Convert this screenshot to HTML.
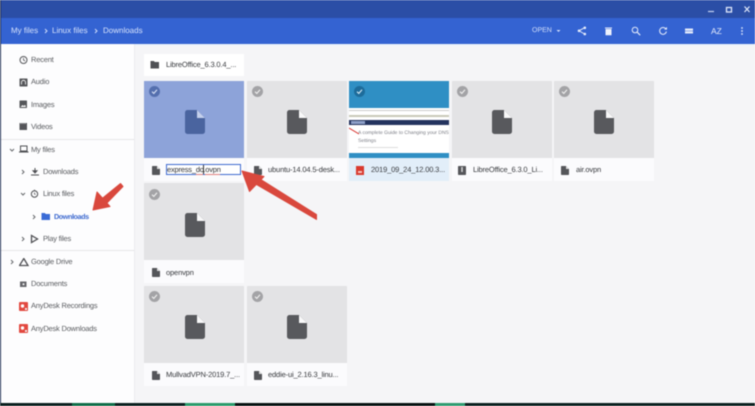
<!DOCTYPE html>
<html><head><meta charset="utf-8">
<style>
html,body{margin:0;padding:0;background:#f5f5f7}
#w{position:relative;width:755px;height:406px;overflow:hidden;background:#f5f5f7;font-family:"Liberation Sans",sans-serif;filter:blur(.45px);text-rendering:geometricPrecision}
#w div,#w svg{position:absolute}
.t{font-size:7.5px;line-height:12px;color:#5a5c60;white-space:nowrap;letter-spacing:-.2px}
.l{font-size:7.5px;line-height:12px;color:#36383c;white-space:nowrap;letter-spacing:-.15px}
.b{font-size:8px;line-height:12px;color:#d6e2fc;white-space:nowrap}
.th{width:100px;height:78px;background:#e3e3e5}
.lb{width:100px;height:23px;background:#fff}
.ck{width:11px;height:11px;border-radius:50%;background:#a3a3a6}
.ck svg{left:0;top:0}
</style></head><body>
<div id="w">
<svg width="0" height="0" style="position:absolute"><defs>
<symbol id="doc" viewBox="0 0 20 24"><path d="M2.500 0H12L20 8V21.500A2.500 2.500 0 0 1 17.500 24H2.500A2.500 2.500 0 0 1 0 21.500V2.500A2.500 2.500 0 0 1 2.500 0Z" fill="currentColor"/><path d="M12 0L20 8H12Z" fill="#f8f8f9"/></symbol>
<symbol id="sd" viewBox="0 0 8 9"><path d="M.7 0H5L8 3V8.300A.7.7 0 0 1 7.300 9H.7A.7.7 0 0 1 0 8.300V.7A.7.7 0 0 1 .7 0Z" fill="#55565a"/><path d="M5 0L8 3H5Z" fill="#ddd"/></symbol>
<symbol id="chk" viewBox="0 0 11 11"><path d="M3 5.700L4.800 7.400L8 3.800" fill="none" stroke="currentColor" stroke-width="1.100"/></symbol>
<symbol id="r" viewBox="0 0 6 6"><path d="M2 1L4 3L2 5" fill="none" stroke="#66686c" stroke-width="1"/></symbol>
<symbol id="dn" viewBox="0 0 6 6"><path d="M1 2L3 4L5 2" fill="none" stroke="#66686c" stroke-width="1"/></symbol>
<symbol id="ad" viewBox="0 0 9 9"><rect width="9" height="9" rx="1" fill="#e2483f"/><circle cx="3.500" cy="4" r="1.700" fill="#fff"/><rect x="6" y="6" width="2" height="2" fill="#eee"/></symbol>
</defs></svg>

<!-- title bar / toolbar -->
<div style="left:0;top:0;width:755px;height:18px;background:#2b4ea6"></div>
<div style="left:0;top:18px;width:755px;height:26px;background:#3463d2"></div>
<div style="left:0;top:44px;width:755px;height:2px;background:#eef4fb"></div>
<div style="left:0;top:0;width:1px;height:403px;background:#1a2a50"></div>
<div class="b" style="left:11px;top:25px">My files</div>
<svg style="left:43px;top:28px" width="6" height="6"><path d="M2 1L4 3L2 5" fill="none" stroke="#cfdcfb"/></svg>
<div class="b" style="left:52px;top:25px">Linux files</div>
<svg style="left:93px;top:28px" width="6" height="6"><path d="M2 1L4 3L2 5" fill="none" stroke="#cfdcfb"/></svg>
<div class="b" style="left:103px;top:25px">Downloads</div>

<!-- window buttons -->
<svg style="left:705px;top:5px" width="46" height="10">
<path d="M3 6.500H9" stroke="#c5d3f2" stroke-width="1.200"/>
<rect x="21.500" y="2.500" width="5" height="4.500" fill="none" stroke="#e0e8fa" stroke-width="1.300"/>
<path d="M39.500 1.500L44.500 7M44.500 1.500L39.500 7" stroke="#e0e8fa" stroke-width="1.200"/>
</svg>

<!-- toolbar icons -->
<div class="b" style="left:532px;top:25px;font-size:7px;color:#d4e0fb">OPEN</div>
<svg style="left:556px;top:29px" width="6" height="4"><path d="M.5 1H4.500L2.500 3Z" fill="#d4e0fb"/></svg>
<svg style="left:577px;top:26px" width="10" height="10"><path d="M7.500 1.700L2 4.800L7.500 8" fill="none" stroke="#e8eefc" stroke-width=".9"/><circle cx="7.800" cy="1.800" r="1.300" fill="#e8eefc"/><circle cx="2" cy="4.800" r="1.300" fill="#e8eefc"/><circle cx="7.800" cy="8" r="1.300" fill="#e8eefc"/></svg>
<svg style="left:604px;top:26px" width="9" height="10"><path d="M1.500 3H7.500V9.200H1.500Z M1 1.500H8V2.500H1Z" fill="#eef2fd"/></svg>
<svg style="left:631px;top:26px" width="10" height="10"><circle cx="4" cy="4" r="2.800" fill="none" stroke="#e4ebfb" stroke-width="1"/><path d="M6 6L9.200 9.200" stroke="#e4ebfb" stroke-width="1.200"/></svg>
<svg style="left:658px;top:26px" width="10" height="10"><path d="M8 3.200A3.400 3.400 0 1 0 8.400 5.500" fill="none" stroke="#e4ebfb" stroke-width="1"/><path d="M6.200 3.600H9V.9Z" fill="#e4ebfb"/></svg>
<svg style="left:684px;top:28px" width="10" height="6"><rect x="1" y=".5" width="8" height="5" fill="#e4ebfb"/><path d="M1 3H9" stroke="#5f86de" stroke-width=".7"/></svg>
<div style="left:711px;top:25px;font-size:8.500px;line-height:12px;color:#e4ebfb;letter-spacing:-.1px">AZ</div>
<svg style="left:740px;top:26px" width="4" height="10"><circle cx="2" cy="2" r=".9" fill="#e4ebfb"/><circle cx="2" cy="5" r=".9" fill="#e4ebfb"/><circle cx="2" cy="8" r=".9" fill="#e4ebfb"/></svg>

<!-- sidebar -->
<div style="left:1px;top:44px;width:133px;height:359px;background:#fdfdfe"></div>
<div style="left:134px;top:44px;width:1px;height:359px;background:#ececef"></div>
<div style="left:1px;top:139px;width:133px;height:1px;background:#e6e6e8"></div>
<div style="left:1px;top:250px;width:133px;height:1px;background:#e6e6e8"></div>

<svg style="left:19px;top:55px" width="10" height="10"><circle cx="4.500" cy="5" r="3.500" fill="none" stroke="#55565a" stroke-width="1"/><path d="M4.500 3V5L6 6" fill="none" stroke="#55565a" stroke-width=".8"/></svg>
<div class="t" style="left:31px;top:54px">Recent</div>
<svg style="left:19px;top:78px" width="9" height="9"><rect width="8" height="8" x=".5" y=".5" rx=".6" fill="#55565a"/><path d="M2.500 6.500V4.300A2 2 0 0 1 6.500 4.300V6.500" fill="none" stroke="#fff" stroke-width=".8"/></svg>
<div class="t" style="left:31px;top:76px">Audio</div>
<svg style="left:19px;top:100px" width="9" height="9"><rect x=".5" y=".5" width="7.500" height="7.500" rx=".6" fill="#55565a"/><path d="M1.500 7L3.500 5L4.800 6L6 4.800L7 7Z" fill="#fff"/></svg>
<div class="t" style="left:31px;top:99px">Images</div>
<svg style="left:19px;top:122px" width="9" height="9"><path d="M.5 1H8V8H.5Z" fill="#55565a"/><path d="M2 1V2M4 1V2M6 1V2" stroke="#fff" stroke-width=".6"/></svg>
<div class="t" style="left:31px;top:121px">Videos</div>

<svg style="left:9px;top:147px" width="6" height="6"><use href="#dn"/></svg>
<svg style="left:19px;top:145px" width="10" height="9"><rect x="1.500" y="1" width="6.500" height="5" fill="none" stroke="#4f5054" stroke-width="1"/><path d="M0 7H9.500" stroke="#4f5054" stroke-width="1.100"/></svg>
<div class="t" style="left:31px;top:144px">My files</div>

<svg style="left:20px;top:169px" width="6" height="6"><use href="#r"/></svg>
<svg style="left:30px;top:167px" width="10" height="10"><path d="M5 1V5.500M3 3.800L5 6L7 3.800Z" fill="#4f5054" stroke="#4f5054" stroke-width="1"/><path d="M1 8H9" stroke="#4f5054" stroke-width="1"/></svg>
<div class="t" style="left:43px;top:166px">Downloads</div>

<svg style="left:20px;top:191px" width="6" height="6"><use href="#dn"/></svg>
<svg style="left:30px;top:189px" width="10" height="10"><circle cx="4.500" cy="5" r="3.200" fill="none" stroke="#4f5054" stroke-width="1"/><path d="M4.500 3.500V5L5.500 5.500" fill="none" stroke="#4f5054" stroke-width=".7"/><path d="M4.500 .8V1.800" stroke="#4f5054"/></svg>
<div class="t" style="left:43px;top:188px">Linux files</div>

<svg style="left:31px;top:214px" width="6" height="6"><use href="#r"/></svg>
<svg style="left:41px;top:212px" width="10" height="9"><path d="M.5 1H3.800L4.800 2H9V8H.5Z" fill="#3a6bd6"/></svg>
<div class="t" style="left:54px;top:211px;color:#3f6bd0;font-weight:bold;font-size:7.200px;letter-spacing:-.4px">Downloads</div>

<svg style="left:20px;top:236px" width="6" height="6"><use href="#r"/></svg>
<svg style="left:30px;top:234px" width="10" height="10"><path d="M1.500 1.500V8.500L7.500 5Z" fill="none" stroke="#4f5054" stroke-width="1.300"/></svg>
<div class="t" style="left:43px;top:233px">Play files</div>

<svg style="left:9px;top:259px" width="6" height="6"><use href="#r"/></svg>
<svg style="left:19px;top:258px" width="10" height="9"><path d="M4.800 .5L9 7.500H.5Z" fill="none" stroke="#4f5054" stroke-width="1.300"/></svg>
<div class="t" style="left:31px;top:256px">Google Drive</div>

<svg style="left:19px;top:280px" width="9" height="8"><path d="M1 1.500H7.500V7H1Z" fill="#66676b"/><circle cx="4.500" cy="4.300" r="1" fill="#fff"/></svg>
<div class="t" style="left:31px;top:278px">Documents</div>

<svg style="left:19px;top:302px" width="9" height="9"><use href="#ad"/></svg>
<div class="t" style="left:31px;top:300px">AnyDesk Recordings</div>
<svg style="left:19px;top:324px" width="9" height="9"><use href="#ad"/></svg>
<div class="t" style="left:31px;top:323px">AnyDesk Downloads</div>

<!-- folder card -->
<div class="lb" style="left:144px;top:54px;height:22px"></div>
<svg style="left:150px;top:60px" width="10" height="9"><path d="M.5 1H3.800L4.800 2H9V8.500H.5Z" fill="#505155"/></svg>
<div class="l" style="left:166px;top:59px">LibreOffice_6.3.0.4_...</div>

<!-- row 1 -->
<div class="th" style="left:144px;top:81px;background:#8da3d9"></div>
<div class="ck" style="left:149px;top:86px;background:#546fae;color:#d6e0f5"><svg width="11" height="11"><use href="#chk"/></svg></div>
<svg style="left:185px;top:110px" width="20" height="24"><path d="M2.500 0H12L20 8V21.500A2.500 2.500 0 0 1 17.500 24H2.500A2.500 2.500 0 0 1 0 21.500V2.500A2.500 2.500 0 0 1 2.500 0Z" fill="#4a649f"/><path d="M12 0L20 8H12Z" fill="#c4d0ec"/></svg>
<div class="lb" style="left:144px;top:158px;background:#fbfbfd"></div>
<svg style="left:152px;top:166px" width="8" height="9"><use href="#sd"/></svg>
<div style="left:166px;top:164px;width:73px;height:9px;border:1px solid #3f6bd0;background:#fff"></div>
<div style="left:167px;top:164px;font-size:7.500px;line-height:12px;color:#303134;white-space:nowrap;letter-spacing:-.2px">express_dc.ovpn</div>
<div style="left:203px;top:165px;width:1px;height:9px;background:#333"></div>
<div style="left:196px;top:174px;width:7px;height:1px;background:#e07f7f"></div>
<div style="left:205px;top:174px;width:15px;height:1px;background:#e07f7f"></div>

<div class="th" style="left:247px;top:81px"></div>
<div class="ck" style="left:252px;top:86px;color:#eee"><svg width="11" height="11"><use href="#chk"/></svg></div>
<svg style="left:287px;top:110px;color:#58595d" width="20" height="24"><use href="#doc"/></svg>
<div class="lb" style="left:247px;top:158px;background:#fbfbfd"></div>
<svg style="left:254px;top:166px" width="8" height="9"><use href="#sd"/></svg>
<div class="l" style="left:268px;top:164px">ubuntu-14.04.5-desk...</div>

<!-- screenshot thumb -->
<div class="th" style="left:349px;top:81px;background:#fff;overflow:hidden">
<div style="left:0;top:0;width:100px;height:27px;background:#2f8fc4"></div>
<div style="left:0;top:29px;width:100px;height:1px;background:#ccc"></div>
<div style="left:0;top:34px;width:100px;height:2px;background:#c9c9b8"></div>
<div style="left:0;top:39px;width:100px;height:5px;background:#24345f"></div>
<div style="left:2px;top:40px;width:14px;height:3px;background:#8fa0c8"></div>
<div style="left:9px;top:49px;font-size:5px;line-height:7.500px;color:#7c7e86;width:91px;white-space:nowrap">A complete Guide to Changing your DNS<br>Settings</div>
<svg style="left:-1px;top:46px" width="14" height="9"><path d="M1 1L11 7" stroke="#d8322c" stroke-width="1"/></svg>
<div style="left:9px;top:66px;width:40px;height:1px;background:#ddd"></div>
<div style="left:0;top:72px;width:100px;height:6px;background:#2f8fc4"></div>
</div>
<div class="ck" style="left:354px;top:86px;background:#1d6c9b;color:#d5e8f3"><svg width="11" height="11"><use href="#chk"/></svg></div>
<div class="lb" style="left:349px;top:158px;background:#e2eef9"></div>
<svg style="left:356px;top:166px" width="8" height="9"><rect width="8" height="9" fill="#d93a2f"/><rect x="2" y="5" width="4" height="2" fill="#f5c0ba"/></svg>
<div class="l" style="left:371px;top:164px">2019_09_24_12.00.3...</div>

<div class="th" style="left:452px;top:81px"></div>
<div class="ck" style="left:457px;top:86px;color:#eee"><svg width="11" height="11"><use href="#chk"/></svg></div>
<svg style="left:492px;top:110px;color:#58595d" width="20" height="24"><use href="#doc"/></svg>
<div class="lb" style="left:452px;top:158px;background:#fbfbfd"></div>
<svg style="left:458px;top:166px" width="8" height="9"><rect width="8" height="9" rx=".7" fill="#55565a"/><rect x="3.300" y="1" width="1.400" height="5" fill="#ddd"/></svg>
<div class="l" style="left:473px;top:164px">LibreOffice_6.3.0_Li...</div>

<div class="th" style="left:554px;top:81px"></div>
<div class="ck" style="left:559px;top:86px;color:#eee"><svg width="11" height="11"><use href="#chk"/></svg></div>
<svg style="left:594px;top:110px;color:#58595d" width="20" height="24"><use href="#doc"/></svg>
<div class="lb" style="left:554px;top:158px;background:#fbfbfd"></div>
<svg style="left:561px;top:166px" width="8" height="9"><use href="#sd"/></svg>
<div class="l" style="left:576px;top:164px">air.ovpn</div>

<!-- row 2 -->
<div class="th" style="left:144px;top:183px"></div>
<div class="ck" style="left:149px;top:189px;color:#eee"><svg width="11" height="11"><use href="#chk"/></svg></div>
<svg style="left:185px;top:213px;color:#58595d" width="20" height="24"><use href="#doc"/></svg>
<div class="lb" style="left:144px;top:260px;background:#fbfbfd"></div>
<svg style="left:152px;top:268px" width="8" height="9"><use href="#sd"/></svg>
<div class="l" style="left:166px;top:267px">openvpn</div>

<!-- row 3 -->
<div class="th" style="left:144px;top:286px"></div>
<div class="ck" style="left:149px;top:291px;color:#eee"><svg width="11" height="11"><use href="#chk"/></svg></div>
<svg style="left:185px;top:315px;color:#58595d" width="20" height="24"><use href="#doc"/></svg>
<div class="lb" style="left:144px;top:363px;background:#fbfbfd"></div>
<svg style="left:152px;top:371px" width="8" height="9"><use href="#sd"/></svg>
<div class="l" style="left:166px;top:369px">MullvadVPN-2019.7_...</div>

<div class="th" style="left:247px;top:286px"></div>
<div class="ck" style="left:252px;top:291px;color:#eee"><svg width="11" height="11"><use href="#chk"/></svg></div>
<svg style="left:287px;top:315px;color:#58595d" width="20" height="24"><use href="#doc"/></svg>
<div class="lb" style="left:247px;top:363px;background:#fbfbfd"></div>
<svg style="left:254px;top:371px" width="8" height="9"><use href="#sd"/></svg>
<div class="l" style="left:268px;top:369px">eddie-ui_2.16.3_linu...</div>

<!-- arrows -->
<svg style="left:0;top:0" width="755" height="406">
<g fill="#d9483d" stroke-linejoin="round" stroke-linecap="round">
<path d="M120.500 183.500L123 186.500L106 204L101.500 199Z" stroke="#d9483d" stroke-width="1"/>
<path d="M93 210L97 192L110 206.500Z" stroke="#d9483d" stroke-width="1"/>
<path d="M316.500 214.500L316.500 219.500L255.500 184L258.500 178Z" stroke="#d9483d" stroke-width="1"/>
<path d="M242 171L264 176.500L249.500 191.500Z" stroke="#d9483d" stroke-width="1"/>
</g>
</svg>

<!-- bottom strip -->
<div style="left:0;top:403px;width:755px;height:3px;background:#0a1f1e"></div>
<div style="left:72px;top:403px;width:43px;height:3px;background:#0f6d48"></div>
<div style="left:235px;top:403px;width:200px;height:3px;background:#061010"></div>
<div style="left:185px;top:403px;width:50px;height:3px;background:#2a9a6a"></div>
<div style="left:435px;top:403px;width:30px;height:3px;background:#2f9b70"></div>
</div>
</body></html>
